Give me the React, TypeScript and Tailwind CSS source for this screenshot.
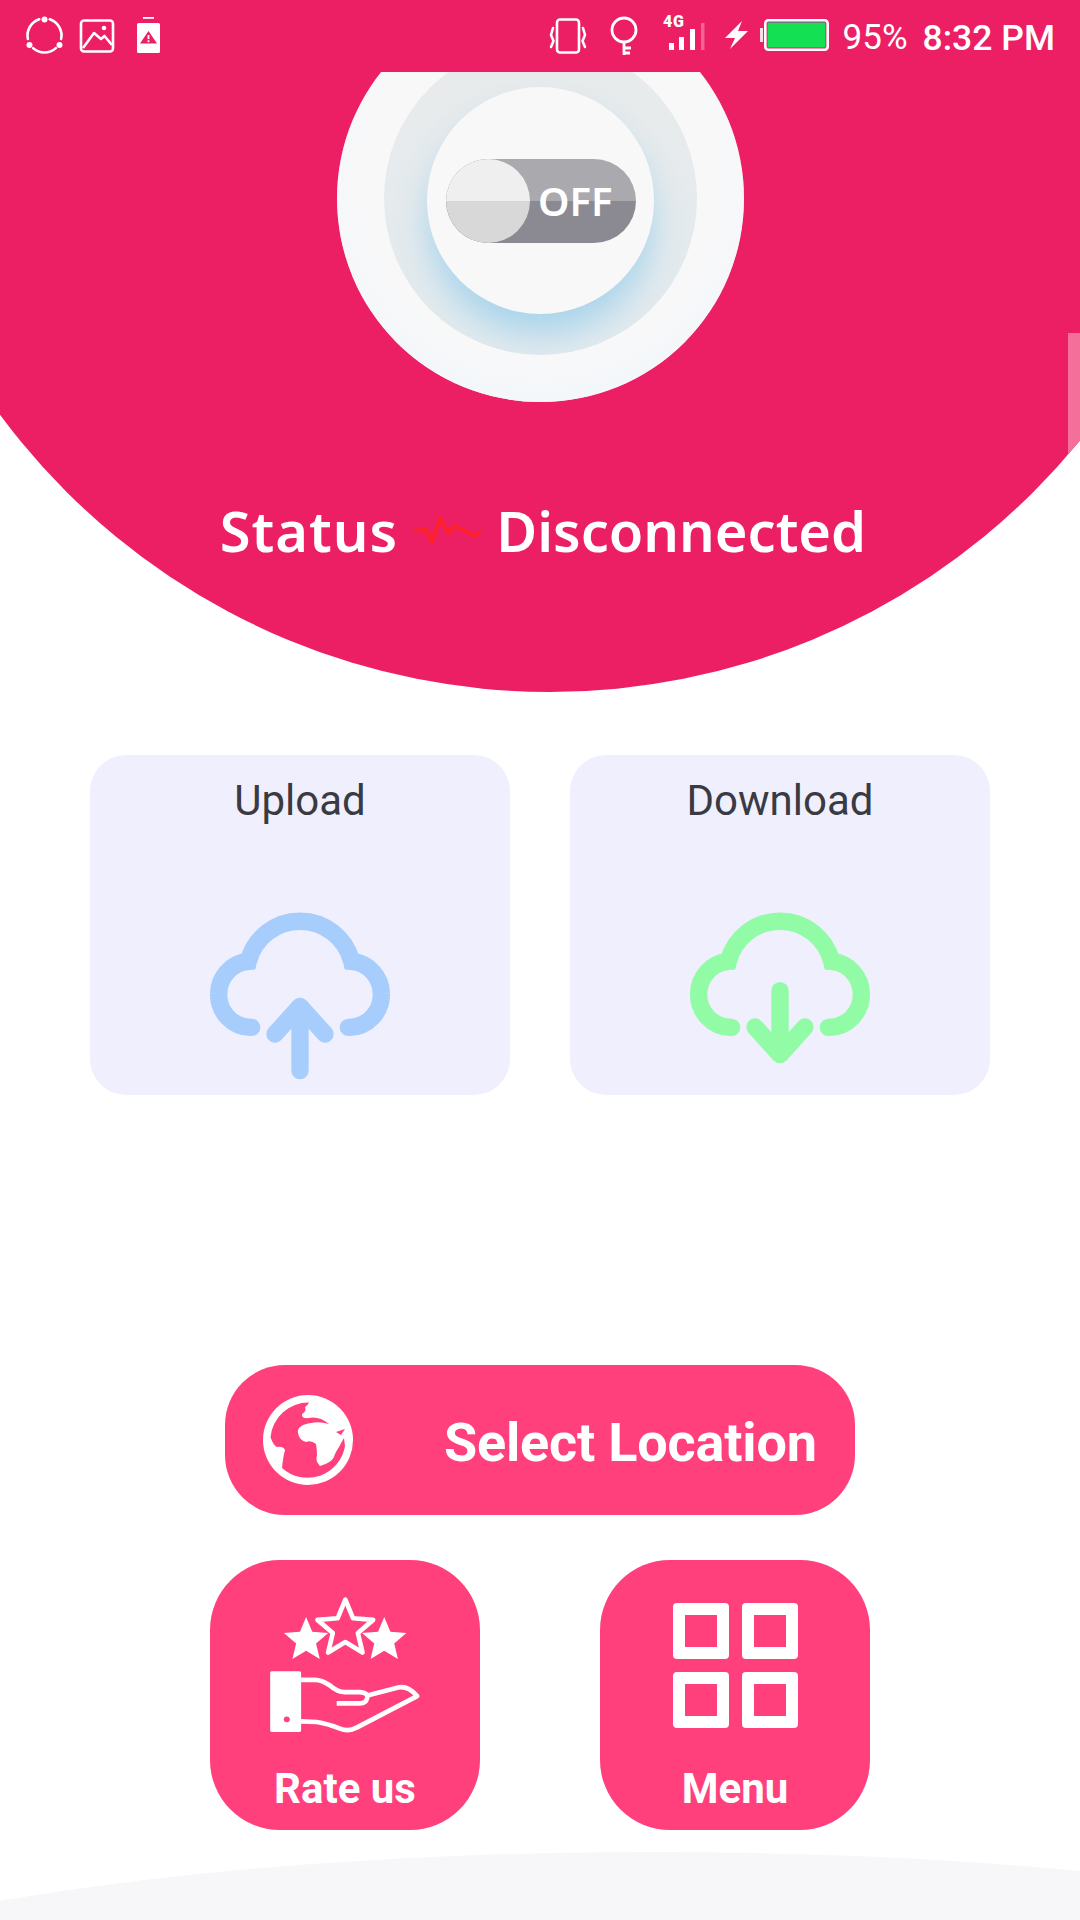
const PINK = "#ec1f64";

function Cloud({ up, color }: { up: boolean; color: string }) {
  return (
    <svg width="200" height="184" viewBox="60 70 600 552" fill="none" stroke={color} strokeWidth="52" strokeLinecap="round" strokeLinejoin="miter">
      <path d="M215 443 H212 A98 98 0 0 1 116 342 A98 98 0 0 1 205 245 A160 160 0 0 1 515 245 A98 98 0 0 1 604 342 A98 98 0 0 1 508 443 H505" />
      <g strokeLinejoin="round">
        {up ? <path d="M360 573 V385 M285 463 L360 380 L435 463" /> : <path d="M360 333 V525 M285 442 L360 525 L435 442" />}
      </g>
    </svg>
  );
}

function Card({ label, up, color }: { label: string; up: boolean; color: string }) {
  return (
    <div className="w-[420px] h-[340px] rounded-[36px] bg-[#efeffe] flex flex-col items-center">
      <div className="mt-[21px] h-[50px] leading-[50px] text-[42px] text-[#3a3a42] font-['Roboto',sans-serif]">{label}</div>
      <div className="mt-[77px]">
        <Cloud up={up} color={color} />
      </div>
    </div>
  );
}

function Star({ cx, cy, r, fill, stroke }: { cx: number; cy: number; r: number; fill: string; stroke?: string }) {
  const pts: string[] = [];
  for (let i = 0; i < 10; i++) {
    const a = (-90 + i * 36) * (Math.PI / 180);
    const rr = i % 2 === 0 ? r : r * 0.45;
    pts.push(`${(cx + rr * Math.cos(a)).toFixed(1)},${(cy + rr * Math.sin(a)).toFixed(1)}`);
  }
  return <polygon points={pts.join(" ")} fill={fill} stroke={stroke} strokeWidth={stroke ? 14 : 0} strokeLinejoin="round" />;
}

function StatusBar() {
  return (
    <div className="relative z-10 h-[72px] flex items-center justify-between pl-[24px] pr-[25px] bg-[#ec1f64] text-white font-['Roboto',sans-serif]">
      <div className="flex items-center">
        <svg width="41" height="72" viewBox="24 0 41 72" fill="none" stroke="#fff" strokeWidth="2.6" strokeLinecap="round">
          <path d="M49.75 19.33 A17 17 0 0 1 61.13 39.03 M55.88 48.13 A17 17 0 0 1 33.12 48.13 M27.87 39.03 A17 17 0 0 1 39.25 19.33" />
          <circle cx="44.5" cy="19.5" r="3" fill="#fff" stroke="none" />
          <circle cx="29.5" cy="45" r="3" fill="#fff" stroke="none" />
          <circle cx="59.5" cy="45" r="3" fill="#fff" stroke="none" />
        </svg>
        <svg className="ml-[14px]" width="36" height="72" viewBox="78 0 36 72" fill="none" stroke="#fff" strokeWidth="2.6" strokeLinejoin="round">
          <rect x="80" y="20.5" width="32" height="31" rx="3" />
          <path d="M82 48 L93 33 L100 39 L103.5 36 L111 45" />
          <circle cx="103" cy="28" r="2.3" fill="#fff" stroke="none" />
        </svg>
        <svg className="ml-[22px]" width="23" height="72" viewBox="137 0 23 72">
          <rect x="143" y="17" width="11" height="1.8" fill="#fff" />
          <rect x="137" y="23" width="23" height="30" rx="1.5" fill="#fff" />
          <polygon points="148.5,31 140,43.5 157,43.5" fill={PINK} />
          <rect x="147.6" y="35" width="1.8" height="4.2" fill="#fff" />
          <rect x="147.6" y="40.3" width="1.8" height="1.8" fill="#fff" />
        </svg>
      </div>
      <div className="flex items-center">
        <svg width="38" height="72" viewBox="550 0 38 72" fill="none" stroke="#fff" strokeWidth="2.6" strokeLinecap="round" strokeLinejoin="round">
          <rect x="558" y="19.5" width="22" height="33" rx="3" />
          <path d="M554 28 L552 35 L554.5 41 L552 47" />
          <path d="M584 28 L586 35 L583.5 41 L586 47" />
        </svg>
        <svg className="ml-[22px]" width="30" height="72" viewBox="610 0 30 72" fill="none" stroke="#fff" strokeWidth="2.8">
          <circle cx="625" cy="30" r="12" />
          <path d="M625 42 V55 M625 48 H632 M625 53 H631" />
        </svg>
        <svg className="ml-[23px]" width="43" height="72" viewBox="663 0 43 72">
          <text x="664" y="27" fontFamily="Roboto, sans-serif" fontWeight="900" fontSize="16" fill="#fff" textLength="21">4G</text>
          <rect x="670" y="43" width="5" height="7" fill="#fff" />
          <rect x="680" y="37" width="5" height="13" fill="#fff" />
          <rect x="691" y="29" width="5" height="21" fill="#fff" />
          <rect x="702" y="23" width="3.5" height="27" fill="#fff" fillOpacity="0.3" />
        </svg>
        <svg className="ml-[20px]" width="24" height="72" viewBox="725 0 24 72">
          <polygon points="742,21 725,38 735,38 730,49 748,31 738,31" fill="#fff" />
        </svg>
        <svg className="ml-[10px]" width="71" height="72" viewBox="759 0 71 72">
          <rect x="760" y="28" width="3" height="14" fill="#fff" fillOpacity="0.85" />
          <rect x="765.3" y="20.3" width="62.4" height="29.4" rx="3" fill="none" stroke="#fff" strokeWidth="2.6" />
          <rect x="767.5" y="22.5" width="58" height="25" fill="#14e053" stroke="#777" strokeWidth="1" />
        </svg>
        <span className="ml-[13px] text-[35px] leading-[40px] pt-[3px]">95%</span>
        <span className="ml-[15px] text-[35.5px] leading-[40px] pt-[3px] font-medium">8:32 PM</span>
      </div>
    </div>
  );
}

function Hero() {
  return (
    <div className="relative h-[692px] overflow-hidden">
      <div className="absolute left-[-134px] top-[-676px] w-[1368px] h-[1368px] rounded-full overflow-hidden bg-[#ec1f64]">
        <div className="absolute left-[1202px] top-[1009px] w-[20px] h-[130px] bg-[#f56f9b]" />
      </div>
      <StatusBar />
      <div className="relative h-[330px] overflow-hidden">
        <div className="mt-[-77px] mx-auto w-[407px] h-[407px] rounded-full bg-[#f8f8f9] flex items-center justify-center shadow-[inset_0_-20px_30px_#f3f7fa]">
          <div className="w-[313px] h-[313px] rounded-full overflow-hidden flex items-center justify-center bg-gradient-to-b from-[#e9ebeb] to-[#e2eaee]">
            <div className="mt-[3px] w-[227px] h-[227px] rounded-full bg-[#f8f8f9] flex items-center justify-center shadow-[0_22px_34px_-2px_#a8d4ec]">
              <div className="relative mt-[2px] ml-[2px] w-[190px] h-[84px] rounded-full overflow-hidden flex flex-col">
                <div className="h-[42px] bg-[#a9a9ae]" />
                <div className="h-[42px] bg-[#8b8a92]" />
                <div className="absolute left-0 top-0 w-[84px] h-[84px] rounded-full overflow-hidden flex flex-col">
                  <div className="h-[42px] bg-[#efefef]" />
                  <div className="h-[42px] bg-[#d8d8d8]" />
                </div>
                <div className="absolute left-[92px] top-[20px] h-[44px] leading-[44px] text-[40px] font-semibold text-white font-['Noto_Sans',sans-serif]">OFF</div>
              </div>
            </div>
          </div>
        </div>
      </div>
      <div className="relative mt-[98px] h-[60px] flex items-center justify-center pl-[6px] text-white text-[56px] leading-[60px] font-semibold font-['Noto_Sans',sans-serif] blur-[0.6px]">
        <span className="tracking-[1px]">Status</span>
        <svg className="ml-[16px] mr-[14px]" width="68" height="30" viewBox="416 514 68 30" fill="none" stroke="#ff2222" strokeWidth="3.5" strokeLinejoin="round" strokeLinecap="round">
          <polyline points="417,530 428,528 434,541 442,517 450,532 457,525 468,530 475,535 482,531" />
        </svg>
        <span>Disconnected</span>
      </div>
    </div>
  );
}

function Globe() {
  return (
    <svg width="90" height="90" viewBox="0 0 90 90">
      <circle cx="45" cy="45" r="45" fill="#fff" />
      <path
        d="M46 7.5 A38 38 0 0 0 7.5 42 Q10 50 14 52 Q20 51 22 55 Q20 62 19 73 A38 38 0 0 0 82 51 L81 43 Q78 48 76 52 Q72 58 71 62 Q68 68 57 71 Q52 66 54 60 Q54 54 53 49 Q48 45 43 47 Q36 45 35 38 Q34 33 40 30 Q46 28 48 28 Q56 26 66 29 Q56 21 46 23 Q38 24 39 19 Q44 16 42 12 Q45 10 46 7.5 Z"
        fill="#ff407d"
      />
      <path d="M73 37 L82 34 L78 40 Z" fill="#ff407d" />
    </svg>
  );
}

function RateIcon() {
  return (
    <svg width="160" height="143" viewBox="195 130 480 430" fill="none">
      <Star cx={318} cy={272} r={70} fill="#fff" />
      <Star cx={553} cy={272} r={70} fill="#fff" />
      <Star cx={436} cy={238} r={88} fill="#ff407d" stroke="#fff" />
      <rect x="210" y="365" width="93" height="183" rx="5" fill="#fff" />
      <circle cx="260" cy="510" r="9" fill="#ff407d" />
      <path
        d="M303 391 H345 Q365 391 390 408 Q412 428 435 428 H480 Q505 430 502 445 Q498 462 480 462 H410 M502 438 L595 414 Q625 408 652 440 L470 535 Q445 548 420 538 Q380 522 350 518 L303 516"
        stroke="#fff"
        strokeWidth="14"
        strokeLinejoin="round"
      />
    </svg>
  );
}

function MenuIcon() {
  return (
    <div className="grid grid-cols-2 gap-[13px]">
      <div className="w-[56px] h-[56px] border-[12px] border-white rounded-[4px]" />
      <div className="w-[56px] h-[56px] border-[12px] border-white rounded-[4px]" />
      <div className="w-[56px] h-[56px] border-[12px] border-white rounded-[4px]" />
      <div className="w-[56px] h-[56px] border-[12px] border-white rounded-[4px]" />
    </div>
  );
}

export default function App() {
  return (
    <div className="relative w-[1080px] h-[1920px] overflow-hidden bg-white font-['Roboto',sans-serif]">
      <div className="absolute left-[-345px] top-[1852px] w-[2000px] h-[400px] rounded-[50%] bg-[#f7f7f9]" />
      <div className="relative">
        <Hero />
        <div className="mt-[63px] flex justify-center gap-[60px]">
          <Card label="Upload" up color="#a6cdfb" />
          <Card label="Download" up={false} color="#92fba5" />
        </div>
        <div className="mt-[270px] mx-auto w-[630px] h-[150px] rounded-[60px] bg-[#ff407d] flex items-center pl-[38px] text-white">
          <Globe />
          <span className="ml-[91px] pt-[5px] text-[54px] font-bold leading-[60px] tracking-[-0.2px]">Select Location</span>
        </div>
        <div className="mt-[45px] flex justify-center gap-[120px]">
          <div className="w-[270px] h-[270px] rounded-[70px] bg-[#ff407d] flex flex-col items-center text-white">
            <div className="mt-[33px] h-[143px]">
              <RateIcon />
            </div>
            <div className="mt-[29px] text-[42px] font-bold leading-[48px]">Rate us</div>
          </div>
          <div className="w-[270px] h-[270px] rounded-[70px] bg-[#ff407d] flex flex-col items-center text-white">
            <div className="mt-[43px] h-[125px]">
              <MenuIcon />
            </div>
            <div className="mt-[37px] text-[42px] font-bold leading-[48px]">Menu</div>
          </div>
        </div>
      </div>
    </div>
  );
}
